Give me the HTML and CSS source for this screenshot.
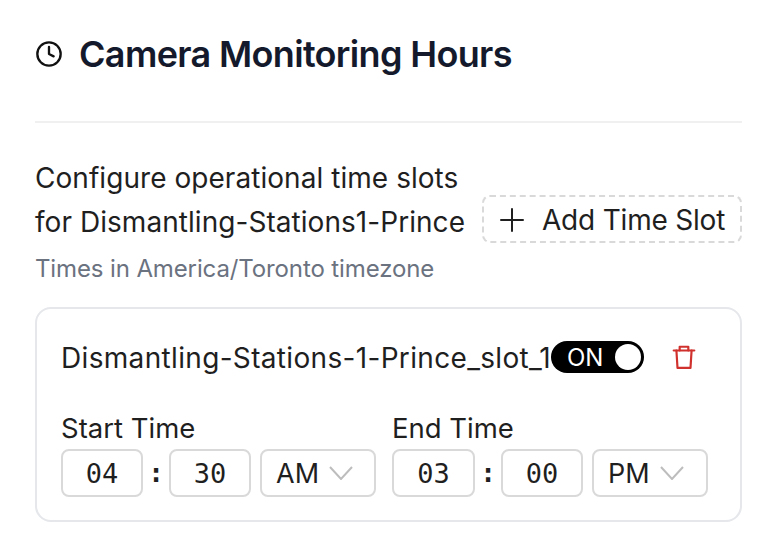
FILE: index.html
```html
<!DOCTYPE html>
<html lang="en">
<head>
    <meta charset="UTF-8">
    <title>Camera Monitoring Hours</title>
    <link rel="stylesheet" href="styles.css">
</head>
<body>
    <main class="panel">
        <header class="panel-header">
            <svg class="clock-icon" viewBox="0 0 24 24" width="28" height="28" fill="none" stroke="#111" stroke-width="2" stroke-linecap="round" stroke-linejoin="round">
                <circle cx="12" cy="12" r="10"></circle>
                <path d="M12 6v6l4 2"></path>
            </svg>
            <h1>Camera Monitoring Hours</h1>
        </header>

        <div class="intro">
            <div class="intro-text">
                <p class="intro-title">Configure operational time slots<br>for Dismantling-Stations1-Prince</p>
            </div>
            <button class="add-btn">
                <svg viewBox="0 0 24 24" width="24" height="24" fill="none" stroke="#1f1f1f" stroke-width="2" stroke-linecap="round">
                    <path d="M12 1v22M1 12h22"></path>
                </svg>
                Add Time Slot
            </button>
        </div>
        <p class="timezone">Times in America/Toronto timezone</p>

        <section class="slot-card">
            <div class="slot-head">
                <div class="slot-name">Dismantling-Stations-1-Prince_slot_1</div>
                <div class="toggle">
                    <span>ON</span>
                    <i class="toggle-knob"></i>
                </div>
                <svg class="trash-icon" viewBox="0 0 24 24" width="26" height="26" fill="none" stroke="#d0312d" stroke-width="2" stroke-linecap="round" stroke-linejoin="round">
                    <path d="M2.5 6h19"></path>
                    <path d="M5 6l1 16h12l1-16"></path>
                    <path d="M8 6V2.5h8V6"></path>
                </svg>
            </div>

            <div class="times">
                <div class="time-group">
                    <label>Start Time</label>
                    <div class="time-row">
                        <div class="field num">04</div>
                        <span class="colon">:</span>
                        <div class="field num">30</div>
                        <div class="field ampm">AM
                            <svg viewBox="0 0 24 14" width="24" height="14" fill="none" stroke="#bdbdbd" stroke-width="2"><path d="M1 1l11 12L23 1"></path></svg>
                        </div>
                    </div>
                </div>
                <div class="time-group">
                    <label>End Time</label>
                    <div class="time-row">
                        <div class="field num wide">03</div>
                        <span class="colon">:</span>
                        <div class="field num">00</div>
                        <div class="field ampm">PM
                            <svg viewBox="0 0 24 14" width="24" height="14" fill="none" stroke="#bdbdbd" stroke-width="2"><path d="M1 1l11 12L23 1"></path></svg>
                        </div>
                    </div>
                </div>
            </div>
        </section>
    </main>
</body>
</html>
```

FILE: styles.css
```css
body {
    margin: 0;
    background-color: #fff;
    font-family: Inter, "Liberation Sans", sans-serif;
    color: #1f1f1f;
}

.panel {
    width: 707px;
    padding: 0 40px 0 35px;
}

.panel-header {
    display: flex;
    align-items: center;
    gap: 16px;
    height: 123px;
    border-bottom: 2px solid #f0f0f0;
    box-sizing: border-box;
    padding-bottom: 13px;
}

.panel-header h1 {
    margin: 0;
    font-size: 36px;
    font-weight: 600;
    letter-spacing: -0.66px;
    color: #141a2b;
}

.intro {
    display: flex;
    justify-content: space-between;
    align-items: flex-end;
    margin-top: 33px;
}

.intro-title {
    margin: 0;
    font-size: 28px;
    line-height: 44px;
    letter-spacing: 0.05px;
    white-space: nowrap;
    color: #1f1f1f;
}

.add-btn {
    display: flex;
    align-items: center;
    gap: 18px;
    width: 260px;
    height: 48px;
    padding: 2px 10px 0 16px;
    box-sizing: border-box;
    background: #fff;
    border: 2px dashed #d9d9d9;
    border-radius: 8px;
    font-family: inherit;
    font-size: 28px;
    letter-spacing: -0.2px;
    white-space: nowrap;
    color: #1f1f1f;
    margin-bottom: 1px;
}

.timezone {
    margin: 8px 0 0;
    font-size: 24px;
    line-height: 34px;
    letter-spacing: -0.12px;
    color: #6b7280;
}

.slot-card {
    margin-top: 21px;
    height: 215px;
    box-sizing: border-box;
    border: 2px solid #e5e7eb;
    border-radius: 16px;
    padding: 0 24px;
}

.slot-head {
    display: flex;
    align-items: center;
    height: 96px;
}

.slot-name {
    width: 490px;
    flex: none;
    padding-top: 2px;
    white-space: nowrap;
    font-size: 28px;
    letter-spacing: 0.33px;
}

.toggle {
    display: flex;
    align-items: center;
    justify-content: space-between;
    width: 93px;
    height: 32px;
    padding: 0 3px 0 16px;
    box-sizing: border-box;
    background: #000;
    border-radius: 16px;
    color: #fff;
    font-size: 24px;
    flex: none;
}

.toggle-knob {
    width: 26px;
    height: 26px;
    border-radius: 50%;
    background: #fff;
}

.trash-icon {
    margin-left: 27px;
}

.times {
    display: flex;
    gap: 16px;
    margin-top: 5px;
}

.time-group label {
    display: block;
    font-size: 27.5px;
    line-height: 36px;
}

.time-row {
    display: flex;
    align-items: center;
    margin-top: 3px;
}

.field {
    display: flex;
    align-items: center;
    height: 48px;
    box-sizing: border-box;
    border: 2px solid #d9d9d9;
    border-radius: 8px;
}

.num {
    width: 82px;
    justify-content: center;
    font-family: "DejaVu Sans Mono", monospace;
    font-size: 27px;
}

.num.wide {
    width: 83px;
}

.colon {
    width: 26px;
    text-align: center;
    font-family: "DejaVu Sans Mono", monospace;
    font-size: 26px;
    font-weight: 700;
}

.ampm {
    width: 116px;
    margin-left: 9px;
    padding-left: 14px;
    gap: 10px;
    font-size: 27px;
}
```
